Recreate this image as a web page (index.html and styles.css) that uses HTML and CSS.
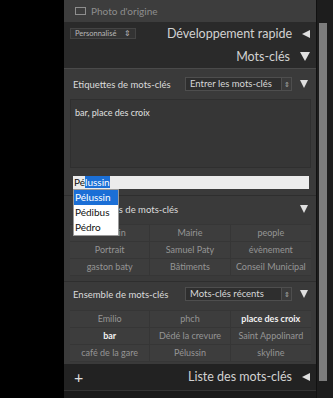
FILE: index.html
```html
<!DOCTYPE html>
<html lang="fr">
<head>
  <meta charset="UTF-8" />
  <title>Mots-clés</title>
  <link rel="stylesheet" href="styles.css">
</head>
<body>
  <div class="panel">
    <div class="top">
      <span class="check"></span>
      <span>Photo d'origine</span>
    </div>

    <div class="header">
      <span class="mini-select">Personnalisé <span class="spin">⇕</span></span>
      <span class="title">Développement rapide</span>
      <span class="tri left"></span>
    </div>

    <div class="header">
      <span class="title">Mots-clés</span>
      <span class="tri down"></span>
    </div>

    <div class="section">
      <div class="row">
        <span class="label">Etiquettes de mots-clés</span>
        <span class="select">Entrer les mots-clés <span class="spin">⇕</span></span>
        <span class="tri down small"></span>
      </div>

      <div class="textarea">bar, place des croix</div>

      <div class="entry">
        <span>Pé</span><span class="sel">lussin</span>
        <ul class="suggest">
          <li class="active">Pélussin</li>
          <li>Pédibus</li>
          <li>Pédro</li>
        </ul>
      </div>

      <div class="sep"></div>

      <div class="row">
        <span class="label">Suggestions de mots-clés</span>
        <span class="tri down small"></span>
      </div>

      <div class="grid">
        <span>Pélussin</span><span>Mairie</span><span>people</span>
        <span>Portrait</span><span>Samuel Paty</span><span>évènement</span>
        <span>gaston baty</span><span>Bâtiments</span><span>Conseil Municipal</span>
      </div>

      <div class="sep second"></div>

      <div class="row">
        <span class="label">Ensemble de mots-clés</span>
        <span class="select">Mots-clés récents <span class="spin">⇕</span></span>
        <span class="tri down small"></span>
      </div>

      <div class="grid recent">
        <span>Emilio</span><span>phch</span><span class="on">place des croix</span>
        <span class="on">bar</span><span>Dédé la crevure</span><span>Saint Appolinard</span>
        <span>café de la gare</span><span>Pélussin</span><span>skyline</span>
      </div>
    </div>

    <div class="header footer">
      <span class="plus">+</span>
      <span class="title">Liste des mots-clés</span>
      <span class="tri left"></span>
    </div>
    <div class="bottom"></div>
  </div>

  <div class="scroll">
    <div class="thumb"></div>
  </div>
</body>
</html>
```

FILE: styles.css
```css
body {
  margin: 0;
  height: 398px;
  overflow: hidden;
  background-color: #000;
  font-family: Lato, "Noto Sans", sans-serif;
  display: flex;
}
.panel {
  margin-left: 64px;
  width: 252px;
  display: flex;
  flex-direction: column;
  background-color: #1a1a1a;
}
.panel > * {
  flex-shrink: 0;
}
.top {
  height: 22px;
  background-color: #3d3d3d;
  display: flex;
  align-items: center;
  gap: 5px;
  padding-left: 11px;
  color: #8e8e8e;
  font-size: 10px;
}
.check {
  width: 9px;
  height: 6px;
  border: 1px solid #8e8e8e;
}
.header {
  height: 23px;
  background-color: #2a2a2a;
  display: flex;
  align-items: center;
  padding: 0 6px;
  color: #d2d2d2;
}
.header .title {
  margin-left: auto;
  font-size: 12.5px;
  margin-right: 10px;
}
.mini-select {
  font-size: 7.5px;
  color: #b8b8b8;
  background-color: #333;
  border: 1px solid #444;
  padding: 0 4px;
  height: 9px;
  line-height: 9px;
  white-space: nowrap;
}
.mini-select .spin {
  margin-left: 6px;
}
.tri {
  width: 0;
  height: 0;
  border-style: solid;
  border-color: transparent;
}
.tri.left {
  border-width: 4px 8px 4px 0;
  border-right-color: #e0e0e0;
}
.tri.down {
  border-width: 9px 5px 0 5px;
  border-top-color: #e0e0e0;
}
.tri.down.small {
  border-width: 8px 4px 0 4px;
  margin-left: 8px;
}
.section {
  flex: 1 0 auto;
  background-color: #3a3a3a;
  border-top: 1px solid #4a4a4a;
  padding: 6px 5px 0 6px;
  display: flex;
  flex-direction: column;
}
.section > * {
  flex-shrink: 0;
}
.row {
  display: flex;
  align-items: center;
  height: 18px;
  padding: 0 3px;
}
.label {
  font-size: 9.5px;
  color: #dcdcdc;
  margin-right: auto;
  white-space: nowrap;
}
.select {
  width: 101px;
  height: 12px;
  line-height: 12px;
  background-color: #2e2e2e;
  border: 1px solid #4e4e4e;
  color: #d8d8d8;
  font-size: 9.5px;
  padding-left: 4px;
  display: flex;
  white-space: nowrap;
}
.select .spin {
  margin-left: auto;
  width: 9px;
  border-left: 1px solid #4e4e4e;
  font-size: 7px;
  text-align: center;
  color: #aaa;
  background-color: #3a3a3a;
}
.textarea {
  margin-top: 6px;
  height: 69px;
  box-sizing: border-box;
  background-color: #363636;
  border: 1px solid #2f2f2f;
  color: #e0e0e0;
  font-size: 9px;
  padding: 7px 4px;
}
.entry {
  position: relative;
  margin: 8px 2px 0 3px;
  height: 13px;
  line-height: 13px;
  background-color: #ececec;
  color: #111;
  font-size: 10px;
  padding-left: 1px;
}
.sel {
  background-color: #1b6fd6;
  color: #fff;
}
.suggest {
  position: absolute;
  left: 0;
  top: 13px;
  margin: 0;
  padding: 0;
  list-style: none;
  width: 44px;
  background-color: #fff;
  border: 1px solid #999;
  z-index: 2;
}
.suggest li {
  height: 15px;
  line-height: 15px;
  padding-left: 1px;
  font-size: 10px;
  color: #111;
}
.suggest li.active {
  background-color: #1b6fd6;
  color: #fff;
}
.sep {
  height: 1px;
  margin: 6px -5px 4px -6px;
  background-color: #2e2e2e;
}
.sep.second {
  margin-top: 5px;
  margin-bottom: 3px;
}
.grid {
  margin-top: 6px;
  display: grid;
  grid-template-columns: 1fr 1fr 1fr;
  background-color: #3d3d3d;
  border-top: 1px solid #363636;
  border-bottom: 1px solid #363636;
}
.grid.recent {
  margin-top: 7px;
}
.grid span {
  height: 16px;
  line-height: 16px;
  text-align: center;
  font-size: 9px;
  color: #959595;
  white-space: nowrap;
  border-right: 1px solid #363636;
  border-bottom: 1px solid #363636;
}
.grid span:nth-child(3n) {
  border-right: none;
}
.grid span:nth-last-child(-n+3) {
  border-bottom: none;
}
.grid span.on {
  color: #f2f2f2;
  font-weight: bold;
}
.footer {
  height: 27px;
  box-sizing: border-box;
  background-color: #222;
  border-bottom: 1px solid #333;
}
.plus {
  font-size: 16px;
  color: #ddd;
  margin-left: 4px;
}
.bottom {
  flex: 1 0 6px;
  background-color: #1a1a1a;
}
.scroll {
  width: 17px;
  background-color: #1d1d1d;
  border-left: 1px solid #111;
  box-sizing: border-box;
  padding-top: 23px;
  padding-left: 2px;
}
.thumb {
  width: 8px;
  height: 358px;
  background-color: #7c7c7c;
}
```
